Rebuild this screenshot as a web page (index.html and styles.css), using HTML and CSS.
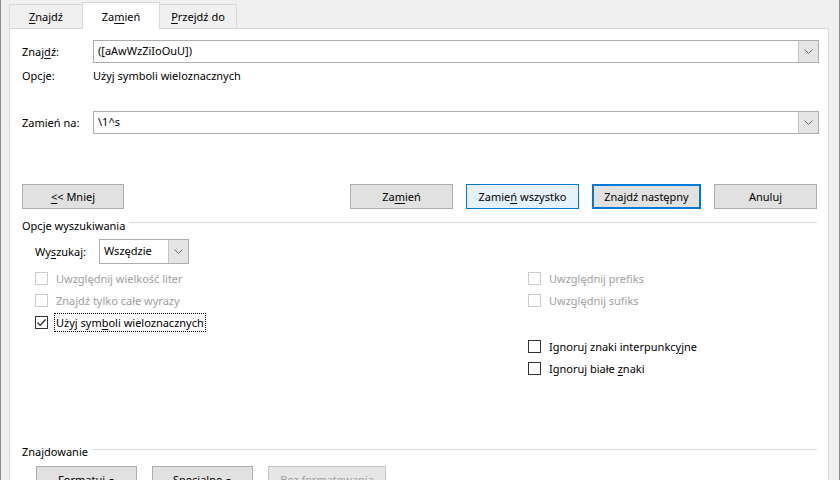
FILE: index.html
```html
<!DOCTYPE html>
<html lang="pl">
  <head>
    <meta charset="utf-8">
    <title>Znajdowanie i zamienianie</title>
    <link rel="stylesheet" href="styles.css">
  </head>
  <body>
    <div class="window">
      <div class="tabs">
        <div class="tab"><u>Z</u>najdź</div>
        <div class="tab active">Za<u>m</u>ień</div>
        <div class="tab"><u>P</u>rzejdź do</div>
      </div>

      <div class="panel">
        <div class="field-row">
          <span class="field-label">Znaj<u>d</u>ź:</span>
          <div class="combo">
            <span class="combo-text">([aAwWzZiIoOuU])</span>
            <span class="combo-btn">
              <svg width="9" height="5" viewBox="0 0 9 5"><polyline points="0.5,0.5 4.5,4.5 8.5,0.5" fill="none" stroke="#6d6d6d" stroke-width="1"/></svg>
            </span>
          </div>
        </div>

        <div class="opts-row">
          <span class="field-label">Opcje:</span>
          <span>Użyj symboli wieloznacznych</span>
        </div>

        <div class="field-row replace-row">
          <span class="field-label">Zamień na:</span>
          <div class="combo">
            <span class="combo-text">\1^s</span>
            <span class="combo-btn">
              <svg width="9" height="5" viewBox="0 0 9 5"><polyline points="0.5,0.5 4.5,4.5 8.5,0.5" fill="none" stroke="#6d6d6d" stroke-width="1"/></svg>
            </span>
          </div>
        </div>

        <div class="button-row">
          <button class="btn btn-less"><u>&lt;</u>&lt; Mniej</button>
          <div class="button-group">
            <button class="btn">Za<u>m</u>ień</button>
            <button class="btn btn-hover btn-all">Zamie<u>ń</u> wszystko</button>
            <button class="btn btn-default btn-next">Znajdź następny</button>
            <button class="btn">Anuluj</button>
          </div>
        </div>

        <div class="group-header">
          <span>Opcje wyszukiwania</span>
          <span class="group-line"></span>
        </div>

        <div class="search-row">
          <span class="search-label">Wy<u>s</u>zukaj:</span>
          <div class="combo select">
            <span class="combo-text">Wszędzie</span>
            <span class="combo-btn">
              <svg width="9" height="5" viewBox="0 0 9 5"><polyline points="0.5,0.5 4.5,4.5 8.5,0.5" fill="none" stroke="#6d6d6d" stroke-width="1"/></svg>
            </span>
          </div>
        </div>

        <div class="options">
          <div class="opt-col left-col">
            <div class="check disabled"><span class="box"></span><span class="check-label">Uwzględnij wielkość liter</span></div>
            <div class="check disabled"><span class="box"></span><span class="check-label">Znajdź tylko całe wyrazy</span></div>
            <div class="check">
              <span class="box">
                <svg width="11" height="11" viewBox="0 0 11 11"><polyline points="1.5,5.5 4.2,8.3 9.5,2.5" fill="none" stroke="#222" stroke-width="1.2"/></svg>
              </span>
              <span class="check-label focused">Użyj sym<u>b</u>oli wieloznacznych</span>
            </div>
          </div>
          <div class="opt-col right-col">
            <div class="check disabled"><span class="box"></span><span class="check-label">Uwzględnij prefiks</span></div>
            <div class="check disabled"><span class="box"></span><span class="check-label">Uwzględnij sufiks</span></div>
            <div class="check spaced"><span class="box"></span><span class="check-label">Ignoruj znaki interpunkc<u>y</u>jne</span></div>
            <div class="check"><span class="box"></span><span class="check-label">Ignoruj białe <u>z</u>naki</span></div>
          </div>
        </div>

        <div class="group-header find-header">
          <span>Znajdowanie</span>
          <span class="group-line"></span>
        </div>

        <div class="bottom-row">
          <button class="btn btn-small">Formatuj <span class="arrow">▼</span></button>
          <button class="btn btn-small">Specjalne <span class="arrow">▼</span></button>
          <button class="btn btn-disabled">Bez formatowania</button>
        </div>
      </div>
    </div>
  </body>
</html>
```

FILE: styles.css
```css
body {
  margin: 0;
  background-color: #f0f0f0;
  font-family: "Noto Sans", sans-serif;
  font-size: 11px;
  color: #000;
}

u {
  text-decoration-thickness: 1px;
  text-underline-offset: 2px;
}

.window {
  box-sizing: border-box;
  height: 480px;
  overflow: hidden;
  border-left: 1px solid #8c8c8c;
  border-right: 1px solid #8c8c8c;
  padding: 0 10px 0 8px;
}

/* tab strip */
.tabs {
  display: flex;
  align-items: flex-end;
  height: 28px;
}

.tab {
  box-sizing: border-box;
  height: 24px;
  line-height: 23px;
  text-align: center;
  border: 1px solid #d9d9d9;
  border-bottom: none;
  margin-right: -1px;
  background-color: #f0f0f0;
}

.tab:nth-child(1) {
  width: 74px;
}

.tab:nth-child(2) {
  width: 78px;
}

.tab:nth-child(3) {
  width: 78px;
}

.tab.active {
  position: relative;
  z-index: 1;
  height: 27px;
  margin-bottom: -1px;
  padding-top: 2px;
  background-color: #fff;
}

/* main panel */
.panel {
  box-sizing: border-box;
  height: 460px;
  background-color: #fff;
  border: 1px solid #d9d9d9;
  padding: 11px 9px 0 12px;
}

.field-row {
  display: flex;
  align-items: center;
  height: 23px;
}

.field-label {
  width: 71px;
  flex-shrink: 0;
}

.combo {
  box-sizing: border-box;
  flex: 1;
  display: flex;
  align-items: stretch;
  height: 23px;
  border: 1px solid #adadad;
  background-color: #fff;
}

.combo-text {
  flex: 1;
  padding-left: 4px;
  line-height: 20px;
  white-space: nowrap;
}

.combo-btn {
  box-sizing: border-box;
  width: 20px;
  display: flex;
  align-items: center;
  justify-content: center;
  background-color: #e5e5e5;
  border-left: 1px solid #c4c4c4;
}

.opts-row {
  display: flex;
  align-items: center;
  height: 24px;
}

.replace-row {
  margin-top: 24px;
}

/* buttons */
.btn {
  box-sizing: border-box;
  height: 25px;
  padding: 0;
  font-family: inherit;
  font-size: 11px;
  color: #000;
  background-color: #e1e1e1;
  border: 1px solid #adadad;
}

.button-row {
  display: flex;
  margin-top: 50px;
  margin-right: 2px;
}

.btn-less {
  width: 102px;
}

.button-group {
  display: flex;
  gap: 13px;
  margin-left: auto;
}

.button-group .btn {
  width: 103px;
}

.button-group .btn-all {
  width: 113px;
}

.button-group .btn-next {
  width: 109px;
}

.btn-hover {
  background-color: #e5f1fb;
  border-color: #0078d7;
}

.btn-default {
  border: 2px solid #0078d7;
}

.group-header {
  display: flex;
  align-items: center;
  gap: 4px;
  height: 24px;
  margin-top: 4px;
  margin-right: 2px;
}

.group-line {
  flex: 1;
  height: 1px;
  margin-bottom: 6px;
  background-color: #dcdcdc;
}

.search-row {
  display: flex;
  align-items: center;
  height: 25px;
  margin-top: 2px;
  padding-left: 13px;
}

.search-label {
  width: 64px;
}

.combo.select {
  flex: none;
  width: 90px;
  height: 25px;
}

.combo.select .combo-text {
  line-height: 22px;
}

/* check boxes */
.options {
  display: flex;
  margin-top: 3px;
  padding-left: 13px;
}

.left-col {
  width: 493px;
}

.check {
  display: flex;
  align-items: center;
  height: 22px;
}

.check.spaced {
  margin-top: 24px;
}

.box {
  box-sizing: border-box;
  width: 13px;
  height: 13px;
  margin-right: 6px;
  border: 1px solid #333;
  background-color: #fff;
  display: flex;
  align-items: center;
  justify-content: center;
}

.check.disabled .box {
  border-color: #cccccc;
}

.check.disabled .check-label {
  color: #a0a0a0;
}

.check-label {
  padding: 1px;
  border: 1px solid transparent;
}

.check-label.focused {
  border: 1px dotted #000;
}

.find-header {
  margin-top: 62px;
  height: 20px;
}

.find-header .group-line {
  margin-bottom: 3px;
}

.bottom-row {
  display: flex;
  gap: 15px;
  margin-top: 5px;
  padding-left: 14px;
}

.btn-small {
  width: 101px;
  height: 26px;
}

.arrow {
  font-size: 7px;
  vertical-align: 1px;
}

.btn-disabled {
  width: 118px;
  height: 26px;
  color: #a0a0a0;
  background-color: #e6e6e6;
  border-color: #c4c4c4;
}
```
